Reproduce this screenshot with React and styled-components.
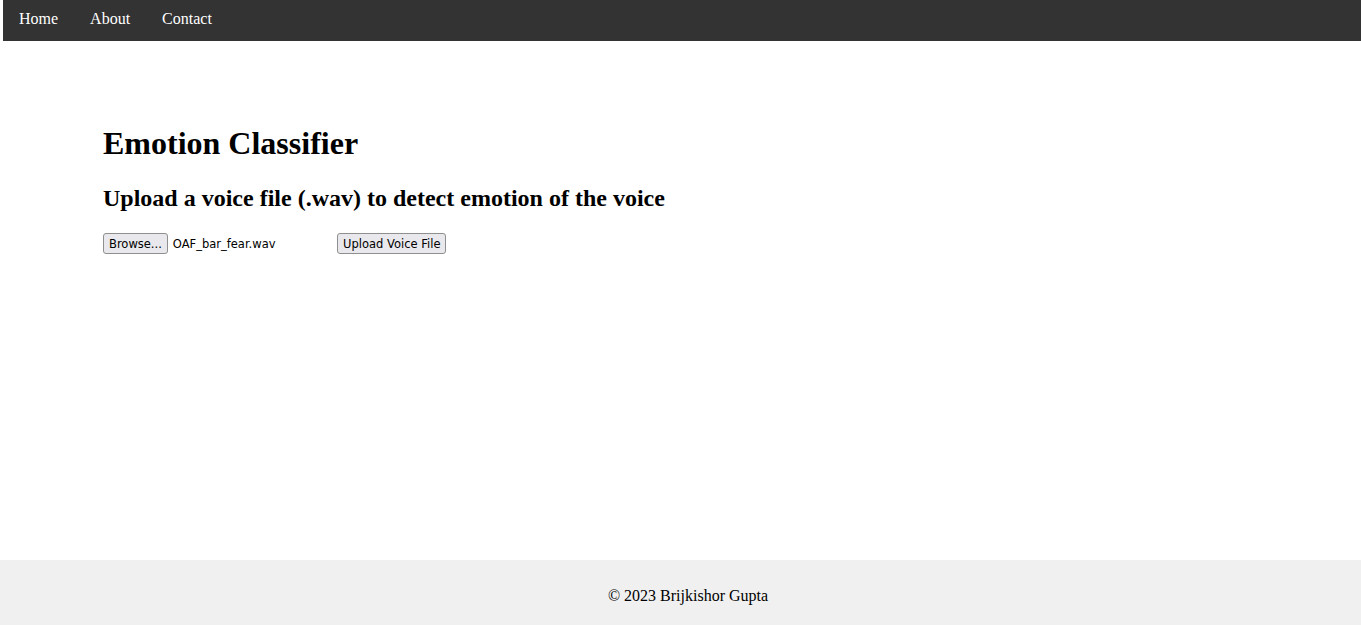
import React, { useState } from 'react';
import styled, { createGlobalStyle } from 'styled-components';

const GlobalStyle = createGlobalStyle`
  html, body {
    margin: 0;
    padding: 0;
    background: #fff;
  }
  body {
    font-family: "Liberation Serif", "Times New Roman", serif;
    font-size: 16px;
    color: #000;
  }
`;

const Page = styled.div`
  display: flex;
  flex-direction: column;
  min-height: 625px;
`;

const NavBar = styled.nav`
  display: flex;
  align-items: center;
  height: 41px;
  padding-bottom: 3px;
  box-sizing: border-box;
  margin-left: 3px;
  background: #333;
`;

const NavLink = styled.a`
  padding: 0 16px;
  color: #fff;
  font-size: 16px;
  text-decoration: none;
  cursor: pointer;
`;

const Main = styled.main`
  flex: 1;
  padding: 84px 0 0 103px;
`;

const Title = styled.h1`
  margin: 0 0 22px;
  font-size: 32px;
  font-weight: bold;
  line-height: 37px;
`;

const Subtitle = styled.h2`
  margin: 0 0 21px;
  font-size: 24px;
  font-weight: bold;
  line-height: 28px;
`;

const UploadForm = styled.form`
  display: flex;
  align-items: center;
`;

const FilePicker = styled.label`
  display: flex;
  align-items: center;
  gap: 5px;
  width: 230px;
  font-family: "DejaVu Sans", Verdana, sans-serif;
  font-size: 11.5px;
  color: #000;
`;

const HiddenInput = styled.input`
  display: none;
`;

const Button = styled.span`
  display: inline-flex;
  align-items: center;
  height: 21px;
  box-sizing: border-box;
  padding: 0 5px;
  border: 1px solid #8f8f8f;
  border-radius: 3px;
  background: #e9e9ed;
  font-family: "DejaVu Sans", Verdana, sans-serif;
  font-size: 11.5px;
  color: #000;
  cursor: default;
`;

const SubmitButton = styled(Button).attrs({ as: 'button', type: 'submit' })`
  margin-left: 4px;
`;

const Footer = styled.footer`
  display: flex;
  align-items: center;
  justify-content: center;
  height: 65px;
  box-sizing: border-box;
  padding: 6px 0 0 15px;
  background: #f0f0f0;
  font-size: 16px;
`;

export default function App() {
  const [fileName, setFileName] = useState('OAF_bar_fear.wav');

  const onChange = event => {
    const file = event.target.files[0];
    if (file) setFileName(file.name);
  };

  const onSubmit = event => {
    event.preventDefault();
  };

  return (
    <>
      <GlobalStyle />
      <Page>
        <NavBar>
          <NavLink>Home</NavLink>
          <NavLink>About</NavLink>
          <NavLink>Contact</NavLink>
        </NavBar>
        <Main>
          <Title>Emotion Classifier</Title>
          <Subtitle>Upload a voice file (.wav) to detect emotion of the voice</Subtitle>
          <UploadForm onSubmit={onSubmit}>
            <FilePicker>
              <Button>Browse...</Button>
              <span>{fileName}</span>
              <HiddenInput type="file" accept=".wav" onChange={onChange} />
            </FilePicker>
            <SubmitButton>Upload Voice File</SubmitButton>
          </UploadForm>
        </Main>
        <Footer>© 2023 Brijkishor Gupta</Footer>
      </Page>
    </>
  );
}
